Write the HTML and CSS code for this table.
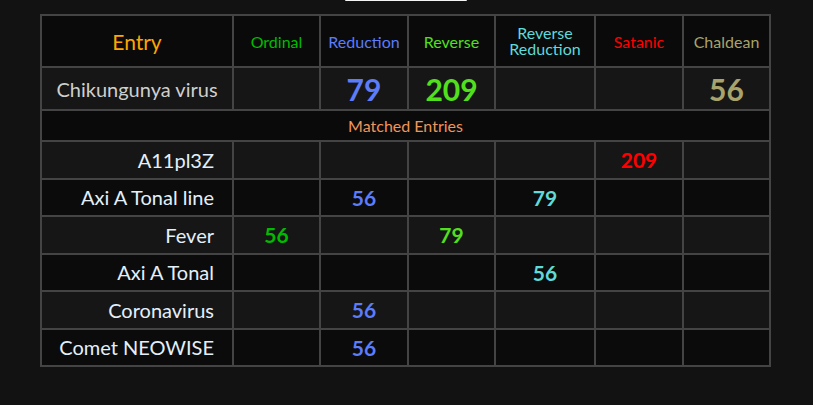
FILE: index.html
```html
<!DOCTYPE html>
<html>
<head>
<meta charset="utf-8">
<link rel="stylesheet" href="styles.css">
</head>
<body>
<div class="topbar"></div>
<table class="gem">
  <colgroup>
    <col class="c-entry"><col class="c-85"><col class="c-86"><col class="c-85"><col class="c-98"><col class="c-86"><col class="c-85">
  </colgroup>
  <tr class="head">
    <td class="h-entry">Entry</td>
    <td class="ord">Ordinal</td>
    <td class="red">Reduction</td>
    <td class="rev">Reverse</td>
    <td class="rred two">Reverse<br>Reduction</td>
    <td class="sat">Satanic</td>
    <td class="cha">Chaldean</td>
  </tr>
  <tr class="main">
    <td class="name-main">Chikungunya virus</td>
    <td></td>
    <td class="red">79</td>
    <td class="rev">209</td>
    <td></td>
    <td></td>
    <td class="cha">56</td>
  </tr>
  <tr class="matched">
    <td colspan="7">Matched Entries</td>
  </tr>
  <tr class="row light">
    <td class="name">A11pl3Z</td><td></td><td></td><td></td><td></td><td class="sat">209</td><td></td>
  </tr>
  <tr class="row dark">
    <td class="name">Axi A Tonal line</td><td></td><td class="red">56</td><td></td><td class="rred">79</td><td></td><td></td>
  </tr>
  <tr class="row light">
    <td class="name">Fever</td><td class="ord">56</td><td></td><td class="rev">79</td><td></td><td></td><td></td>
  </tr>
  <tr class="row dark">
    <td class="name">Axi A Tonal</td><td></td><td></td><td></td><td class="rred">56</td><td></td><td></td>
  </tr>
  <tr class="row light">
    <td class="name">Coronavirus</td><td></td><td class="red">56</td><td></td><td></td><td></td><td></td>
  </tr>
  <tr class="row dark">
    <td class="name">Comet NEOWISE</td><td></td><td class="red">56</td><td></td><td></td><td></td><td></td>
  </tr>
</table>
</body>
</html>
```
FILE: styles.css
```css
html, body {
  margin: 0;
  padding: 0;
  background: #121212;
  font-family: Lato, "Open Sans", sans-serif;
}

.topbar {
  width: 122px;
  height: 1px;
  margin-left: 345px;
  background: #f4f4f4;
  border-radius: 0 0 6px 6px;
}

.gem {
  margin: 13px 0 0 40px;
  width: 731px;
  table-layout: fixed;
  border-collapse: separate;
  border-spacing: 2px;
  background: #444444;
}

.c-entry { width: 190px; }
.c-85 { width: 85px; }
.c-86 { width: 86px; }
.c-98 { width: 98px; }

.gem td {
  padding: 0;
  text-align: center;
  vertical-align: middle;
  background: #161616;
}

.head td {
  height: 50px;
  background: #0a0a0a;
  font-size: 16px;
}

.head td.two {
  line-height: 16px;
}

.head .h-entry {
  font-size: 21px;
  color: #ffa500;
}

.main td {
  height: 41px;
  font-size: 30px;
  font-weight: bold;
}

.main td.name-main {
  font-size: 20px;
  font-weight: normal;
  color: #cfcfcf;
}

.matched td {
  height: 29px;
  background: #0a0a0a;
  color: #f0955a;
  font-size: 16px;
}

.row td {
  height: 35.5px;
  font-size: 21px;
  font-weight: bold;
}

.row.dark td {
  background: #0b0b0b;
}

.row td.name {
  text-align: right;
  padding-right: 18px;
  font-size: 20px;
  font-weight: normal;
  color: #e3f0fb;
}

.ord { color: #00bb00; }
.red { color: #5c7cfa; }
.rev { color: #52e01e; }
.rred { color: #5fd9d9; }
.sat { color: #ff0000; }
.cha { color: #a8a36c; }
```
